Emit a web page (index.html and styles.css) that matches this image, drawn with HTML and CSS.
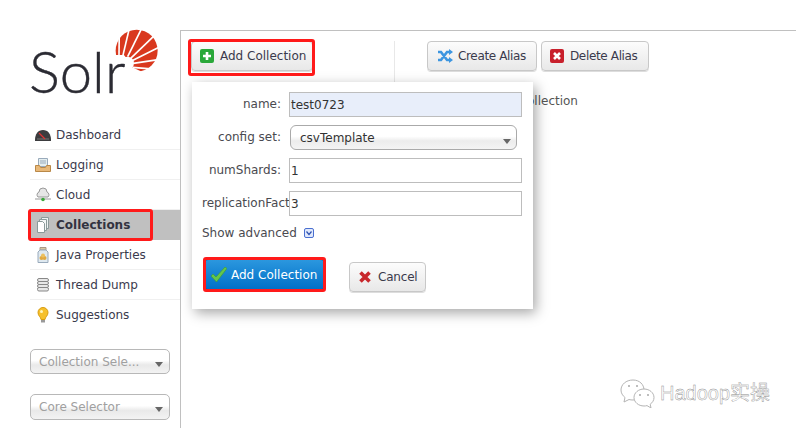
FILE: index.html
```html
<!DOCTYPE html>
<html lang="en">
<head>
<meta charset="utf-8">
<title>Solr Admin</title>
<link rel="stylesheet" href="styles.css">
</head>
<body>
<div class="page">
  <aside class="sidebar">
    <svg class="logo" width="180" height="120" viewBox="0 0 180 120">
      <g transform="scale(.3333)">
        <circle cx="410" cy="152" r="63" fill="#d9381e"/>
        <polygon points="335,165 372,165 392,190 392,200 400,203 440,222 335,222" fill="#fff"/>
        <circle cx="382" cy="190" r="20" fill="#fff"/>
        <g stroke="#fff" stroke-width="5">
          <line x1="357" y1="170" x2="358" y2="85"/>
          <line x1="368" y1="170" x2="388" y2="85"/>
          <line x1="383" y1="170" x2="425" y2="85"/>
          <line x1="392" y1="175" x2="470" y2="100"/>
          <line x1="396" y1="182" x2="480" y2="140"/>
          <line x1="400" y1="190" x2="480" y2="178"/>
          <line x1="398" y1="202" x2="470" y2="208"/>
        </g>
      </g>
      <text class="logo-word" x="29" y="93">Solr</text>
    </svg>
    <nav class="nav">
      <a class="nav-item"><svg class="nav-icon" width="16" height="16" viewBox="0 0 16 16"><path d="M0 13C0 7 3 3 8 3s8 4 8 10v1H0z" fill="#3c3c3e"/><path d="M2 12h12" stroke="#777" stroke-width="1"/><path d="M4 6l6 6" stroke="#d33" stroke-width="1.2"/></svg>Dashboard</a>
      <a class="nav-item"><svg class="nav-icon" width="16" height="16" viewBox="0 0 16 16"><path d="M3.500 1.500h9v8h-9z" fill="#e4eef0" stroke="#9ab"/><path d="M5 4h6M5 6h6" stroke="#9ab"/><path d="M.5 8.500h4l1 2h5l1-2h4v6h-15z" fill="#e8b878" stroke="#b98848"/></svg>Logging</a>
      <a class="nav-item"><svg class="nav-icon" width="16" height="16" viewBox="0 0 16 16"><path d="M3 10a3 3 0 0 1 1-5 4 4 0 0 1 8 0 3 3 0 0 1 1 5z" fill="#e6e6e6" stroke="#999"/><path d="M0 12h16" stroke="#999"/><circle cx="8" cy="12.500" r="1.800" fill="#3aa63a"/></svg>Cloud</a>
      <a class="nav-item is-active"><svg class="nav-icon" width="16" height="16" viewBox="0 0 16 16"><path d="M6.500.500h7v11h-7z" fill="#eef2f2" stroke="#8a9a9a"/><path d="M4.500 2.500h7v11h-7z" fill="#f4f7f7" stroke="#8a9a9a"/><path d="M2.500 4.500h5l2 2v9h-7z" fill="#fff" stroke="#8a9a9a"/></svg>Collections</a>
      <a class="nav-item"><svg class="nav-icon" width="16" height="16" viewBox="0 0 16 16"><path d="M5 .500h6v2.500H5z" fill="#d8c8a0" stroke="#a98"/><path d="M3 15.500V5l2-2h6l2 2v10.500z" fill="#dfe9f0" stroke="#9ab"/><circle cx="6.500" cy="11" r="2" fill="#e0a840"/><circle cx="9.500" cy="11" r="2" fill="#e0a840"/><circle cx="8" cy="8.500" r="2" fill="#ecc060"/></svg>Java Properties</a>
      <a class="nav-item"><svg class="nav-icon" width="16" height="16" viewBox="0 0 16 16"><g fill="#e8e8e8" stroke="#888"><rect x="2.500" y="1.500" width="11" height="3" rx="1.500"/><rect x="2.500" y="4.500" width="11" height="3" rx="1.500"/><rect x="2.500" y="7.500" width="11" height="3" rx="1.500"/><rect x="2.500" y="10.500" width="11" height="3.500" rx="1.500"/></g></svg>Thread Dump</a>
      <a class="nav-item nav-last"><svg class="nav-icon" width="16" height="16" viewBox="0 0 16 16"><path d="M6 12.500C6 10 3 9 3 5.500a5 5 0 0 1 10 0C13 9 10 10 10 12.500z" fill="#f6c02c" stroke="#d89c10"/><circle cx="6.500" cy="4.500" r="1.500" fill="#fff6c0"/><path d="M6 13h4v2.500H6z" fill="#9a9a9a"/></svg>Suggestions</a>
    </nav>
    <div class="side-select">Collection Sele...<span class="caret"></span></div>
    <div class="side-select side-select-2">Core Selector<span class="caret"></span></div>
    <div class="mark mark-nav"></div>
  </aside>

  <main class="main">
    <div class="actions">
      <div class="actions-left">
        <button class="btn btn-add"><svg class="btn-icon" width="14" height="14" viewBox="0 0 14 14"><rect width="14" height="14" rx="2" fill="#2aa83a"/><path d="M7 3v8M3 7h8" stroke="#fff" stroke-width="2.600"/></svg>Add Collection</button>
      </div>
      <div class="actions-right">
        <div class="alias-buttons">
          <button class="btn btn-alias"><svg class="btn-icon btn-icon-wide" width="18" height="14" viewBox="0 0 16 14"><path d="M1 3h3l6 8h3M1 11h3l6-8h3" fill="none" stroke="#3d96e0" stroke-width="2.600"/><path d="M12 0l4 3-4 3zM12 8l4 3-4 3z" fill="#3d96e0"/></svg>Create Alias</button>
          <button class="btn btn-alias"><svg class="btn-icon" width="14" height="14" viewBox="0 0 14 14"><rect width="14" height="14" rx="2" fill="#c8202c"/><path d="M4 4l6 6M10 4l-6 6" stroke="#fff" stroke-width="2.600"/></svg>Delete Alias</button>
        </div>
        <p class="hint">Please select a collection</p>
      </div>
    </div>

    <form class="popup">
      <div class="row"><label class="row-label">name:</label><div class="field field-name">test0723</div></div>
      <div class="row"><label class="row-label">config set:</label><div class="field-select">csvTemplate<span class="caret"></span></div></div>
      <div class="row"><label class="row-label">numShards:</label><div class="field">1</div></div>
      <div class="row"><label class="row-label">replicationFactor:</label><div class="field">3</div></div>
      <div class="advanced">Show advanced<svg class="adv-icon" width="10" height="10" viewBox="0 0 10 10"><rect x=".5" y=".5" width="9" height="9" rx="1.500" fill="#dfe8fb" stroke="#4a6fd0"/><path d="M2.500 3.500L5 6.500l2.500-3" fill="none" stroke="#2c4fb0" stroke-width="1.200"/></svg></div>
      <div class="form-actions">
        <button class="btn-primary" type="button"><svg class="check" width="16" height="15" viewBox="0 0 16 15"><path d="M0 9l2-2 3 3L14 0l2 1.500L5.500 15z" fill="#63c64c" stroke="#3f9a30" stroke-width=".6"/></svg>Add Collection</button>
        <button class="btn btn-cancel" type="button"><svg class="btn-icon" width="14" height="14" viewBox="0 0 14 14"><path d="M2.500 2.500l9 9M11.500 2.500l-9 9" stroke="#c8282c" stroke-width="3.600"/></svg>Cancel</button>
      </div>
      <div class="mark mark-submit"></div>
    </form>
    <div class="mark mark-add"></div>
  </main>

  <div class="watermark">
    <svg width="36" height="30" viewBox="0 0 36 30" fill="#fff" stroke="#b4b4b4" stroke-width="1">
      <path d="M13 2C6 2 1 6.500 1 12c0 3 1.500 5.500 4 7.500L4 24l5-2.500c1.300.4 2.600.5 4 .5 6.500 0 11-4.500 11-10S19.500 2 13 2z"/>
      <path d="M24 11c-5.500 0-10 3.800-10 8.500S18.500 28 24 28c1 0 2-.1 3-.4l4 2.400-.8-3.800c2.400-1.600 3.800-4 3.800-6.700C34 14.800 29.500 11 24 11z"/>
      <circle cx="9" cy="8" r="1" stroke="none" fill="#a8a8a8"/><circle cx="17" cy="8" r="1" stroke="none" fill="#a8a8a8"/>
      <circle cx="20" cy="17" r="1" stroke="none" fill="#a8a8a8"/><circle cx="28" cy="17" r="1" stroke="none" fill="#a8a8a8"/>
    </svg>
    <span class="watermark-text">Hadoop实操</span>
  </div>
</div>
</body>
</html>
```

FILE: styles.css
```css
* { box-sizing: border-box; }
html, body { margin: 0; height: 100%; overflow: hidden; background: #fff; }
body { font: 12px/16px "DejaVu Sans", Verdana, sans-serif; color: #3a3a44; }

.page { position: relative; display: flex; width: 796px; height: 428px; overflow: hidden; }

.sidebar { position: relative; flex: 0 0 180px; padding-left: 30px; }
.logo { display: block; margin-left: -30px; }
.logo-word { font: 300 58px "Lato", sans-serif; fill: #2b2b33; stroke: #2b2b33; stroke-width: .4px; }

.nav { display: flex; flex-direction: column; }
.nav-item { display: flex; align-items: center; height: 30px; padding-left: 5px; border-bottom: 1px solid #f0f0f0; color: #3a3a4c; }
.nav-last { border-bottom: 0; }
.nav-icon { margin-right: 5px; flex: none; }
.is-active { background: #c0c0c0; font-weight: bold; border-bottom: 0; color: #333340; }

.side-select { position: relative; width: 140px; height: 25px; margin-top: 19px; padding: 4px 8px; border: 1px solid #b8b8b8; border-radius: 5px; color: #a0a0a0; background: linear-gradient(#fff 45%, #e9e9e9 65%, #f3f3f3); white-space: nowrap; }
.side-select-2 { height: 26px; margin-top: 20px; }
.caret { position: absolute; right: 6px; top: 12px; border: 5px solid transparent; border-top-color: #666; border-bottom: 0; border-left-width: 4px; border-right-width: 4px; }

.main { position: relative; flex: 1; margin-top: 30px; border-top: 1px solid #c0c0c0; border-left: 1px solid #c0c0c0; padding: 10px; }
.actions { display: flex; }
.actions-left { flex: 0 0 203px; }
.actions-right { border-left: 1px solid #e8e8e8; padding-left: 32px; height: 70px; }
.alias-buttons { display: flex; gap: 4px; }
.hint { margin: 22px 0 0; width: 150px; color: #555; text-align: right; white-space: nowrap; }

.btn { display: inline-flex; align-items: center; height: 30px; padding: 0 9px; border: 1px solid #c8c8c8; border-radius: 4px; background: linear-gradient(#fcfcfc, #e8e8e8); font: inherit; color: #3a3a4c; white-space: nowrap; box-shadow: 0 1px 0 #ddd; }
.btn-add { width: 122px; padding: 0 0 0 8px; }
.btn-alias { letter-spacing: -.35px; padding: 0 10px 0 8px; }
.btn-icon { margin-right: 6px; flex: none; }
.btn-icon-wide { margin-right: 4px; }

.popup { position: absolute; left: 11px; top: 51px; width: 341px; height: 227px; padding: 10px 10px 0; background: #fff; box-shadow: 3px 4px 12px rgba(0,0,0,.35); }
.row { display: flex; height: 25px; margin-bottom: 8px; }
.row-label { flex: 0 0 87px; padding-right: 8px; line-height: 25px; text-align: right; white-space: nowrap; overflow: hidden; color: #4a4a50; }
.field { width: 233px; height: 25px; padding: 0 1px; line-height: 24px; border: 1px solid #bdbdbd; color: #333; }
.field-name { background: #e8eefa; }
.field-select { position: relative; width: 227px; height: 25px; margin-left: 1px; padding: 0 9px; line-height: 24px; border: 1px solid #aaa; border-radius: 6px; background: linear-gradient(#fff 45%, #ececec 65%, #f4f4f4); color: #333; }
.field-select .caret { right: 5px; top: 13px; }
.advanced { display: flex; align-items: center; height: 16px; margin-top: 9px; color: #4a4a50; }
.adv-icon { margin-left: 7px; }

.form-actions { display: flex; align-items: flex-start; margin: 18px 0 0 2px; }
.btn-primary { display: inline-flex; align-items: center; width: 121px; height: 31px; padding: 0 0 0 6px; border: 1px solid #0a5ea8; border-radius: 4px; background: linear-gradient(#2b97de, #0070c8); color: #fff; font: inherit; white-space: nowrap; }
.check { margin-right: 4px; flex: none; }
.btn-cancel { margin: 3px 0 0 24px; width: 77px; padding: 0 0 0 8px; letter-spacing: -.2px; }

.mark { position: absolute; border: 3px solid #ff1a1a; border-radius: 3px; pointer-events: none; }
.mark-nav { left: 28px; top: 209px; width: 125px; height: 32px; }
.mark-add { left: 7px; top: 8px; width: 127px; height: 37px; }
.mark-submit { left: 11px; top: 175px; width: 123px; height: 35px; }

.watermark { position: absolute; left: 620px; top: 378px; display: flex; align-items: center; gap: 4px; color: #fff; }
.watermark-text { font: 20px/30px "Liberation Sans", "Noto Sans CJK SC", sans-serif; -webkit-text-stroke: .4px #8a8a8a; }
```
